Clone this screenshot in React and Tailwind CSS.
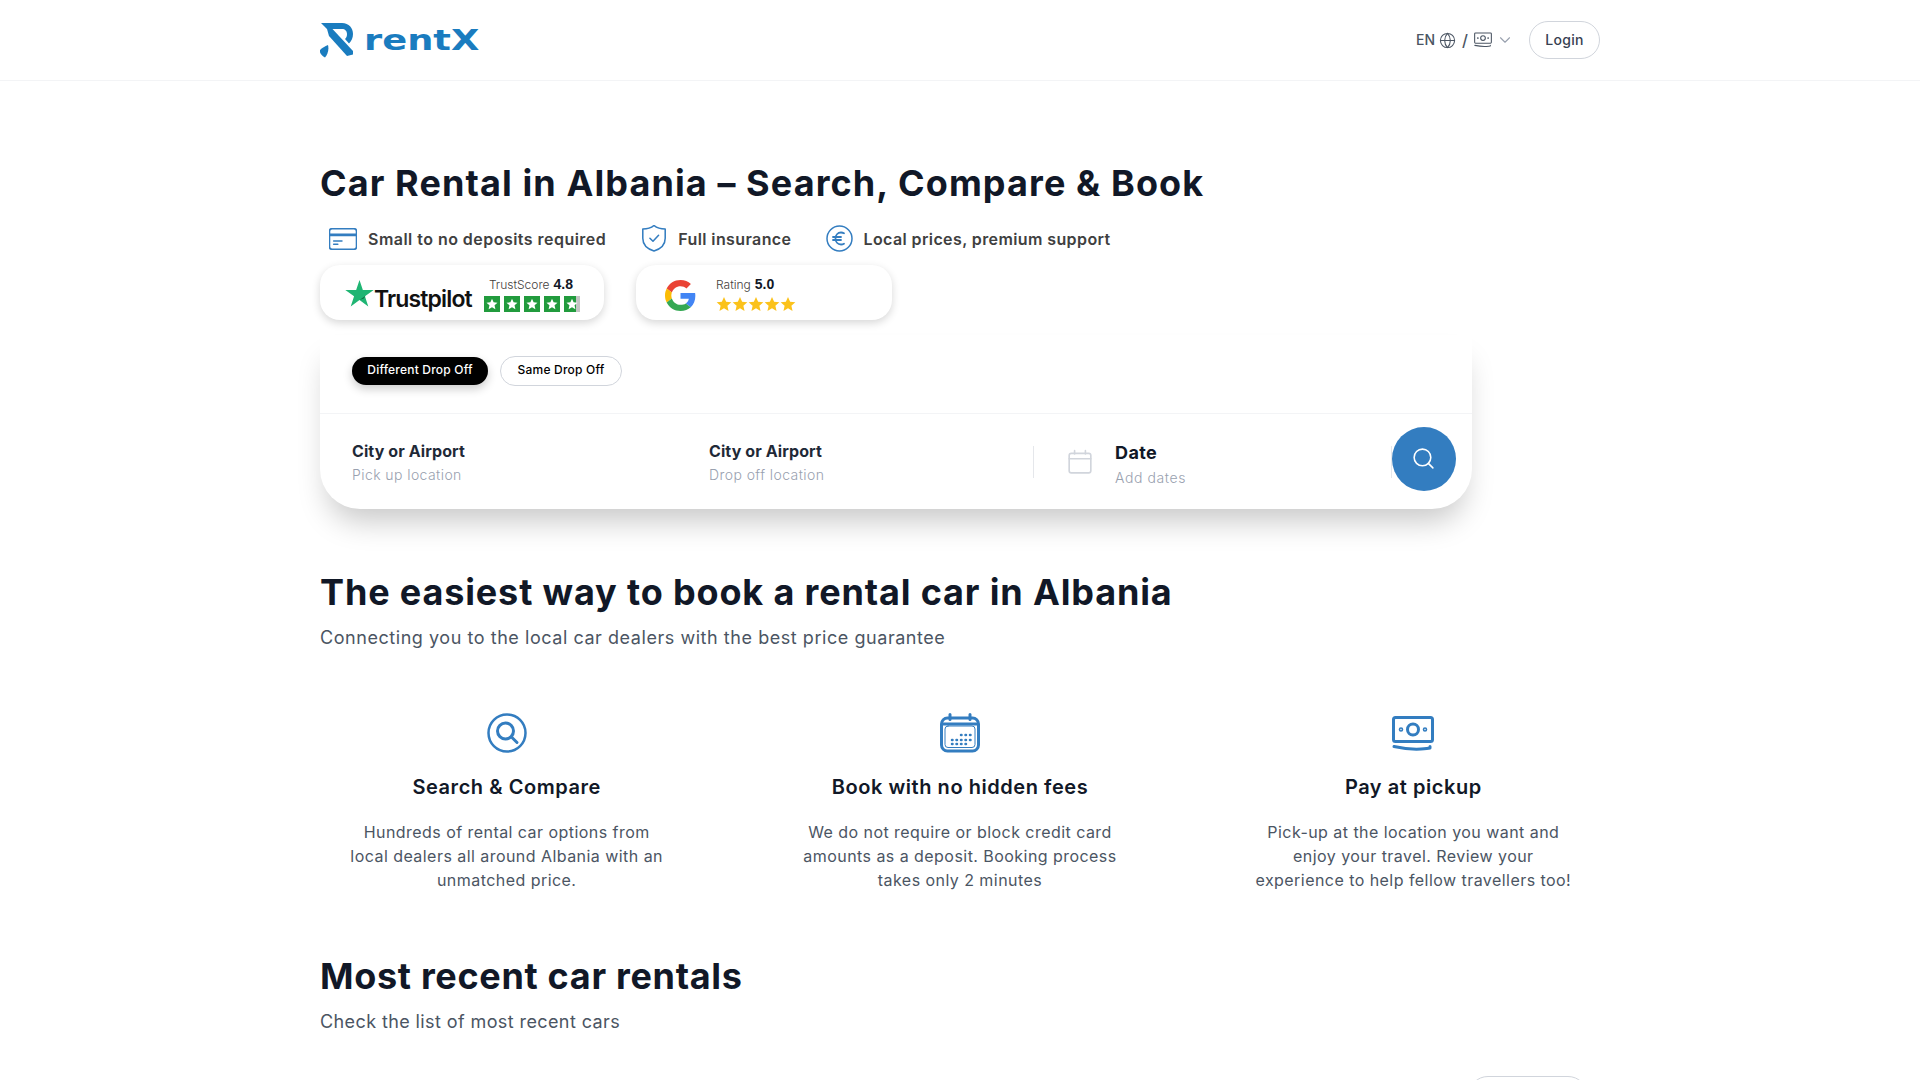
import { ChevronDown, Globe, Search } from 'lucide-react';

const Star = ({ className }) => (
  <svg viewBox="0 0 24 24" className={className} fill="currentColor">
    <path d="M12 1.500l3.200 7.200 7.800.8-5.900 5.200 1.700 7.700L12 18.400l-6.800 4 1.700-7.700L1 9.500l7.800-.8z" />
  </svg>
);

const Logo = () => (
  <svg viewBox="0 0 34 36" className="h-9 w-[34px]" fill="#1a7cbf">
    <path d="M1 1h21c7 0 11 5 11 11 0 4-1.500 7-4 9.500l-4-4.500c1.500-1.200 2-3 2-5 0-3-2-5-5-5H7z" />
    <path d="M7 7h5.500L33 29v3.500l-6 1.500L9 14z" />
    <path d="M0 28c2-2 5-4 8-5 1 4 0 9-3 12.500-2-1-6-4-5-7.500z" />
  </svg>
);

const MoneyIcon = ({ className, strokeWidth = 2 }) => (
  <svg viewBox="0 0 42 36" className={className} fill="none" stroke="currentColor" strokeWidth={strokeWidth} strokeLinecap="round" strokeLinejoin="round">
    <rect x="1.500" y="1.500" width="39" height="24" rx="2" />
    <circle cx="21" cy="13.500" r="5.500" />
    <circle cx="9" cy="13.500" r="0.800" />
    <circle cx="33" cy="13.500" r="0.800" />
    <path d="M2 30.500c9 2 18 3 27 2.500 3-.2 7-.5 9-1v-1.500" />
  </svg>
);

const CalendarIcon = () => (
  <svg viewBox="0 0 40 40" className="h-10 w-10 text-[#337dc0]" fill="none" stroke="currentColor" strokeWidth="3" strokeLinecap="round">
    <rect x="1.500" y="5" width="37" height="33" rx="6" />
    <path d="M10 1.500v5M30 1.500v5M3 11h34" />
    <rect x="5" y="13" width="30" height="21.500" rx="3" strokeWidth="1" />
    <path d="M21 22h.5M25.500 22h.5M30 22h.5M12 27h.5M16.500 27h.5M21 27h.5M25.500 27h.5M30 27h.5M12 31h.5M16.500 31h.5M21 31h.5M25.500 31h.5" strokeWidth="2.500" />
  </svg>
);

const Feature = ({ icon, title, lines }) => (
  <div className="flex flex-col items-center text-center">
    <div className="flex h-10 items-center">{icon}</div>
    <h3 className="mt-5 text-[20px] font-semibold leading-7 tracking-[0.55px] text-[#111827]">{title}</h3>
    <p className="mt-[19px] text-base leading-6 tracking-[0.45px] text-[#4b5563]">
      {lines.map((l) => (
        <span key={l} className="block">{l}</span>
      ))}
    </p>
  </div>
);

const App = () => {
  return (
    <div className="h-[1080px] overflow-hidden bg-white font-['Inter','Noto_Sans',sans-serif] text-[#111827]">
      {/* Header */}
      <header className="h-[81px] border-b border-gray-100">
        <div className="mx-auto flex h-20 w-[1280px] items-center justify-between">
          <div className="flex items-center gap-[10px]">
            <Logo />
            <span className="origin-left scale-x-[1.27] font-['DejaVu_Sans',sans-serif] text-[29px] font-bold leading-none text-[#1a7cbf]">rentX</span>
          </div>
          <div className="flex items-center">
            <div className="flex items-center text-sm font-medium text-[#4b5563]">
              <span>EN</span>
              <Globe className="ml-1 h-[17px] w-[17px]" strokeWidth={1.5} />
              <span className="mx-[6px] text-base">/</span>
              <MoneyIcon className="h-[16px] w-[18px]" strokeWidth={2.500} />
              <ChevronDown className="ml-[4px] h-[18px] w-[18px] text-gray-400" strokeWidth={1.5} />
            </div>
            <button className="ml-[15px] h-[38px] w-[71px] rounded-full border border-gray-300 text-sm font-medium tracking-[0.3px] text-[#374151]">Login</button>
          </div>
        </div>
      </header>

      <main className="mx-auto w-[1280px]">
        <h1 className="mt-[80px] text-[36px] font-bold leading-[44px] tracking-[1.1px]">Car Rental in Albania – Search, Compare &amp; Book</h1>

        {/* USPs */}
        <div className="mt-5 flex items-center pl-[9px] text-base font-semibold text-[#404040]">
          <svg viewBox="0.5 0.5 27 21" className="h-[22px] w-[28px] text-[#337dc0]" fill="none" stroke="currentColor" strokeWidth="1.500" strokeLinecap="round">
            <rect x="1" y="1" width="26" height="20" rx="2.500" />
            <path d="M1 7h26" strokeWidth="2.500" />
            <path d="M5 13h8M5 16h4" />
          </svg>
          <span className="ml-[11px] tracking-[0.47px]">Small to no deposits required</span>
          <svg viewBox="1 1 24 26.500" className="ml-[35px] h-[27px] w-[26px] text-[#337dc0]" fill="none" stroke="currentColor" strokeWidth="1.500" strokeLinecap="round" strokeLinejoin="round">
            <path d="M13 1.500c3 2.500 7 3.500 11 3.500v9c0 6-4.500 10.500-11 12.500C6.500 24.500 2 20 2 14V5c4 0 8-1 11-3.500z" />
            <path d="M9 14l3 3 5.500-6" />
          </svg>
          <span className="ml-[11px] tracking-[0.4px]">Full insurance</span>
          <svg viewBox="0.5 0.5 27 27" className="ml-[35px] h-[27px] w-[27px] text-[#337dc0]" fill="none" stroke="currentColor" strokeWidth="1.500" strokeLinecap="round">
            <circle cx="14" cy="14" r="12.500" />
            <path d="M18.500 8.800a6 6 0 0 0-3-.8c-3.300 0-5.500 2.700-5.500 6s2.200 6 5.500 6a6 6 0 0 0 3-.8M7.500 12.500h8M7.500 15.500h8" strokeWidth="1.800" />
          </svg>
          <span className="ml-[10px] tracking-[0.4px]">Local prices, premium support</span>
        </div>

        {/* Rating badges */}
        <div className="mt-[13px] flex gap-8">
          <div className="flex h-[55px] w-[284px] items-center rounded-[20px] bg-white pl-[24px] shadow-[0_3px_8px_rgba(0,0,0,0.16)]">
            <svg viewBox="0 0 24 24" className="mt-[1px] h-[31px] w-[31px] shrink-0">
              <path fill="#1fb573" d="M12 1.500l2.600 7.700H23l-6.800 4.900 2.600 8-6.800-5-6.800 5 2.600-8L1 9.200h8.400z" />
              <path fill="#0d6b3f" d="M15.300 15.900l-3.300 1.200 4.700-3.300z" />
            </svg>
            <span className="-ml-[1px] mt-[13px] text-[23px] font-semibold leading-none tracking-[-0.85px] text-[#111]">Trustpilot</span>
            <div className="ml-3 flex flex-col">
              <div className="ml-[5px] mt-[1px] flex items-baseline gap-1 text-[12px] font-light leading-[18px] text-[#44403c]">
                TrustScore <b className="font-['Liberation_Sans',sans-serif] text-[14px] font-bold text-[#111827]">4.8</b>
              </div>
              <div className="mt-[2px] flex gap-1">
                {[0, 1, 2, 3].map((i) => (
                  <div key={i} className="flex h-4 w-4 items-center justify-center bg-[#219b3d]">
                    <Star className="h-3 w-3 text-white" />
                  </div>
                ))}
                <div className="flex h-4 w-4 items-center justify-center bg-[linear-gradient(90deg,#219b3d_78%,#c4c4c4_78%)]">
                  <Star className="h-3 w-3 text-white" />
                </div>
              </div>
            </div>
          </div>
          <div className="flex h-[55px] w-[256px] items-center rounded-[20px] bg-white pl-[29px] shadow-[0_3px_8px_rgba(0,0,0,0.16)]">
            <svg viewBox="0 0 48 48" className="mt-[5px] h-[31px] w-[31px]">
              <path fill="#EA4335" d="M24 9.500c3.500 0 6.700 1.200 9.200 3.600l6.900-6.900C35.900 2.400 30.500 0 24 0 14.600 0 6.500 5.400 2.600 13.200l8 6.200C12.500 13.700 17.800 9.500 24 9.500z" />
              <path fill="#4285F4" d="M47 24.500c0-1.600-.1-3.100-.4-4.500H24v9h12.900c-.6 3-2.200 5.500-4.700 7.200l7.700 6c4.500-4.200 7.100-10.300 7.100-17.700z" />
              <path fill="#FBBC05" d="M10.600 28.600c-.5-1.400-.8-3-.8-4.600s.3-3.200.8-4.600l-8-6.200C.9 16.500 0 20.100 0 24s.9 7.500 2.600 10.800l8-6.200z" />
              <path fill="#34A853" d="M24 48c6.500 0 11.900-2.100 15.900-5.800l-7.700-6c-2.200 1.500-4.900 2.300-8.200 2.300-6.200 0-11.500-4.200-13.400-9.900l-8 6.200C6.500 42.600 14.600 48 24 48z" />
            </svg>
            <div className="ml-5 flex flex-col">
              <div className="mt-[1px] flex items-baseline gap-1 text-[12px] font-light leading-[18px] text-[#44403c]">
                Rating <b className="font-['Liberation_Sans',sans-serif] text-[14px] font-bold text-[#111827]">5.0</b>
              </div>
              <div className="mt-[2px] flex text-[#fbc21b]">
                {[0, 1, 2, 3, 4].map((i) => (
                  <Star key={i} className="h-4 w-4" />
                ))}
              </div>
            </div>
          </div>
        </div>

        {/* Search card */}
        <section className="mt-[15px] w-[1152px] rounded-b-[40px] bg-white shadow-[0_20px_30px_-8px_rgba(0,0,0,0.22)]">
          <div className="flex h-[79px] items-center gap-3 border-b border-gray-100 px-8 pb-[7px]">
            <button className="h-7 w-[136px] rounded-full bg-black pb-px text-[12px] font-medium tracking-[0.2px] text-white shadow-[0_4px_10px_rgba(0,0,0,0.2)]">Different Drop Off</button>
            <button className="h-[30px] w-[122px] rounded-full border border-gray-300 pb-px text-[12px] font-medium tracking-[0.2px] text-black">Same Drop Off</button>
          </div>
          <div className="flex h-[95px] items-center pl-8 pr-4">
            <div className="w-[357px]">
              <div className="text-base font-bold leading-6 tracking-[0.1px] text-[#1f2937]">City or Airport</div>
              <div className="mt-[2px] text-sm font-light leading-5 tracking-[0.42px] text-gray-400">Pick up location</div>
            </div>
            <div className="w-[324px]">
              <div className="text-base font-bold leading-6 tracking-[0.1px] text-[#1f2937]">City or Airport</div>
              <div className="mt-[2px] text-sm font-light leading-5 tracking-[0.42px] text-gray-400">Drop off location</div>
            </div>
            <div className="h-8 w-px bg-gray-200" />
            <svg viewBox="0 0 24 24" className="ml-[33px] h-[26px] w-[26px] text-gray-300" fill="none" stroke="currentColor" strokeWidth="1.500" strokeLinecap="round">
              <rect x="2" y="4" width="20" height="18" rx="2" />
              <path d="M7 1.500v3M17 1.500v3M2 9h20" />
            </svg>
            <div className="ml-[22px] w-[276px] pt-[6px]">
              <div className="text-[18px] font-bold leading-6 tracking-[0.4px] text-[#111827]">Date</div>
              <div className="mt-[3px] text-sm font-light leading-5 tracking-[0.6px] text-gray-400">Add dates</div>
            </div>
            <div className="h-8 w-px bg-gray-200" />
            <button className="mb-[5px] flex h-16 w-16 items-center justify-center rounded-full bg-[#337dc0] pb-[2px] pr-[2px] text-white">
              <Search className="h-[25px] w-[25px]" strokeWidth={1.5} />
            </button>
          </div>
        </section>

        <h2 className="mt-[61px] text-[36px] font-bold leading-[44px] tracking-[0.85px]">The easiest way to book a rental car in Albania</h2>
        <p className="mt-[10px] text-[18px] leading-7 tracking-[0.55px] text-[#4b5563]">Connecting you to the local car dealers with the best price guarantee</p>

        {/* Steps */}
        <div className="mt-[61px] grid grid-cols-3 gap-20">
          <Feature
            title="Search & Compare"
            lines={['Hundreds of rental car options from', 'local dealers all around Albania with an', 'unmatched price.']}
            icon={
              <svg viewBox="0 0 40 40" className="h-10 w-10 text-[#337dc0]" fill="none" stroke="currentColor" strokeWidth="2.500" strokeLinecap="round">
                <circle cx="20" cy="20" r="18.500" />
                <circle cx="18.500" cy="18" r="8" strokeWidth="3" />
                <path d="M24.500 24l5.500 5.500" strokeWidth="3" />
              </svg>
            }
          />
          <Feature
            title="Book with no hidden fees"
            lines={['We do not require or block credit card', 'amounts as a deposit. Booking process', 'takes only 2 minutes']}
            icon={<CalendarIcon />}
          />
          <Feature
            title="Pay at pickup"
            lines={['Pick-up at the location you want and', 'enjoy your travel. Review your', 'experience to help fellow travellers too!']}
            icon={<MoneyIcon className="mt-[2px] h-9 w-[42px] text-[#337dc0]" strokeWidth={3} />}
          />
        </div>

        <h2 className="mt-[62px] text-[36px] font-bold leading-[44px] tracking-[0.68px]">Most recent car rentals</h2>
        <p className="mt-[10px] text-[18px] leading-7 tracking-[0.4px] text-[#4b5563]">Check the list of most recent cars</p>

        <div className="mt-[40px] flex justify-end pr-3">
          <div className="h-10 w-[120px] rounded-t-[20px] border border-gray-300" />
        </div>
      </main>
    </div>
  );
};

export default App;
